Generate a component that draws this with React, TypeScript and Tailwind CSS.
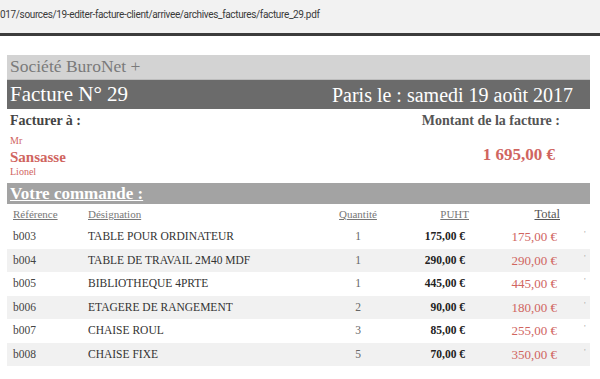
import * as React from 'react';

const rows = [
  { ref: 'b003', des: 'TABLE POUR ORDINATEUR', qte: '1', pu: '175,00 €', total: '175,00 €' },
  { ref: 'b004', des: 'TABLE DE TRAVAIL 2M40 MDF', qte: '1', pu: '290,00 €', total: '290,00 €' },
  { ref: 'b005', des: 'BIBLIOTHEQUE 4PRTE', qte: '1', pu: '445,00 €', total: '445,00 €' },
  { ref: 'b006', des: 'ETAGERE DE RANGEMENT', qte: '2', pu: '90,00 €', total: '180,00 €' },
  { ref: 'b007', des: 'CHAISE ROUL', qte: '3', pu: '85,00 €', total: '255,00 €' },
  { ref: 'b008', des: 'CHAISE FIXE', qte: '5', pu: '70,00 €', total: '350,00 €' },
];

const serif = "font-['Liberation_Serif',serif]";
const cols = 'grid grid-cols-[75px_236px_80px_71px_92px_29px]';

export default function App() {
  return (
    <div className="w-[600px] h-[379px] overflow-hidden bg-white">
      <div className="h-[33px] bg-[#f2f2f2] flex items-center">
        <span className="text-[10px] text-[#3a3a3a] font-['Roboto',sans-serif] tracking-[-0.35px] -mt-[4px]">
          017/sources/19-editer-facture-client/arrivee/archives_factures/facture_29.pdf
        </span>
      </div>
      <div className="h-[3px] bg-[#3c3c3c]" />

      <div className={`${serif} pt-[19px] pl-[7px] w-[590px]`}>
        <div className="h-[24px] bg-[#d3d3d3] flex items-center pl-[3px]">
          <span className="text-[17.5px] text-[#7a7a7a] leading-none">Société BuroNet +</span>
        </div>
        <div className="h-[30px] bg-[#6b6b6b] flex items-center justify-between pl-[3px] pr-[17px] border-t border-[#bdbdbd]">
          <span className="text-[21px] text-white leading-none">Facture N° 29</span>
          <span className="text-[20px] text-white leading-none">Paris le : samedi 19 août 2017</span>
        </div>

        <div className="flex justify-between h-[74px]">
          <div className="flex flex-col pl-[3px]">
            <span className="text-[14px] font-bold text-[#444] mt-[1px]">Facturer à :</span>
            <span className="text-[10px] text-[#d0655f] mt-[5px] leading-none">Mr</span>
            <span className="text-[15px] font-bold text-[#d0655f] leading-none mt-[4px]">Sansasse</span>
            <span className="text-[10px] text-[#d0655f] leading-none mt-[2px]">Lionel</span>
          </div>
          <div className="flex flex-col items-end pr-[30px]">
            <span className="text-[14px] font-bold text-[#555] mt-[1px]">Montant de la facture :</span>
            <span className="text-[17px] font-bold text-[#d0655f] mt-[11px] mr-[5px]">1 695,00 €</span>
          </div>
        </div>

        <div className="h-[21px] bg-[#a3a3a3] flex items-center pl-[3px]">
          <span className="text-[17px] font-bold text-white underline leading-none">Votre commande :</span>
        </div>

        <div className={`${cols} h-[21px] items-center text-[11px] text-[#777]`}>
          <span className="pl-[6px] underline">Référence</span>
          <span className="pl-[6px] underline">Désignation</span>
          <span className="text-center underline">Quantité</span>
          <span className="text-right underline">PUHT</span>
          <span className="text-right pr-[1px] underline text-[12.5px] text-[#555]">Total</span>
          <span />
        </div>

        {rows.map((r, i) => (
          <div
            key={r.ref}
            className={`${cols} h-[23.5px] items-center text-[11.5px] ${i % 2 === 1 ? 'bg-[#f1f1f1]' : 'bg-white'}`}
          >
            <span className="pl-[6px] text-[#444]">{r.ref}</span>
            <span className="pl-[6px] text-[#333]">{r.des}</span>
            <span className="text-center text-[#666]">{r.qte}</span>
            <span className="text-right pr-[4px] font-bold text-[#222]">{r.pu}</span>
            <span className="text-right pr-[4px] text-[13px] text-[#d0655f]">{r.total}</span>
            <span className="pl-[23px] text-[9px] text-[#aaa] -mt-[4px]">'</span>
          </div>
        ))}
      </div>
    </div>
  );
}
